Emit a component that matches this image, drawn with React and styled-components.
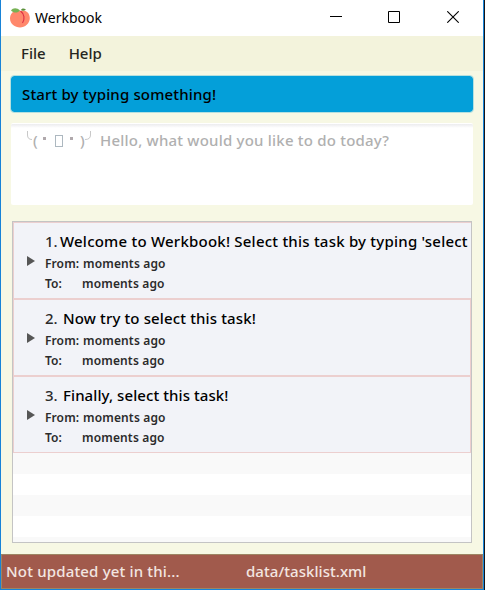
import React from "react";
import styled, { createGlobalStyle } from "styled-components";

const Global = createGlobalStyle`
  * { box-sizing: border-box; }
  body { margin: 0; background: #14161a; overflow: hidden; }
`;

const Window = styled.div`
  width: 484px;
  height: 590px;
  display: flex;
  flex-direction: column;
  border: solid #1883d7;
  border-width: 0 1px 1px;
  background: #f7f8e4;
  font-family: "Noto Sans", "Open Sans", sans-serif;
  font-weight: 500;
  color: #000;
`;

const TitleBar = styled.header`
  height: 36px;
  flex: none;
  display: flex;
  align-items: center;
  background: #fff;
  padding-left: 8px;
`;

const Label = styled.span`
  display: block;
  flex: none;
  white-space: pre;
  font-size: ${(p) => p.$size || 15}px;
  line-height: 20px;
  letter-spacing: ${(p) => p.$track || 0}px;
  font-weight: ${(p) => p.$weight || 500};
  color: ${(p) => p.$color || "#000"};
`;

const Brand = styled.div`
  display: flex;
  align-items: center;
  gap: 4px;
  flex: 1;
`;

const Controls = styled.div`
  display: flex;
  height: 36px;
  align-items: center;
  gap: 46px;
  padding: 0 24px 2px 0;
  svg { display: block; }
  svg:last-child { margin-left: 1px; }
`;

const MenuBar = styled.nav`
  height: 35px;
  flex: none;
  display: flex;
  align-items: center;
  gap: 23px;
  padding: 0 0 2px 20px;
  background: #f3f3dc;
`;

const Result = styled.div`
  height: 38px;
  flex: none;
  margin: 4px 9px 0 9px;
  padding-left: 11px;
  display: flex;
  align-items: center;
  border: 1px solid #b5e0df;
  border-radius: 4px;
  background: #049fd9;
  background-clip: padding-box;
`;

const Command = styled.div`
  height: 82px;
  flex: none;
  margin: 10px 10px 0;
  padding: 6px 13px;
  display: flex;
  border-radius: 2px;
  border-top: 1px solid #fff;
  background: linear-gradient(#ececee, #fff 4px);
`;

const Face = styled.div`
  width: 76px;
  height: 20px;
  display: flex;
  align-items: center;
`;

const Slot = styled.span`
  width: ${(p) => p.$w}px;
  flex: none;
  font-size: 15px;
  line-height: 20px;
  color: #b0b0b0;
  white-space: pre;
`;

const Eye = styled.span`
  width: 3px;
  height: 3px;
  flex: none;
  margin: 0 ${(p) => p.$after}px 3px ${(p) => p.$before}px;
  background: #b0a9ac;
`;

const Mouth = styled.span`
  width: 8px;
  height: 12px;
  flex: none;
  margin-top: 1px;
  border: 1px solid #adb8c0;
`;

const Mark = styled.svg`
  display: block;
  flex: none;
`;

const List = styled.main`
  height: 322px;
  flex: none;
  margin: 16px 11px 0;
  border: 1px solid #c4c4c4;
  background: repeating-linear-gradient(#f9f9f9 0 21px, #fff 21px 42px) 0 231px / 100% 89px no-repeat #fff;
`;

const Card = styled.article`
  height: 77px;
  display: flex;
  align-items: flex-start;
  border: 1px solid #eccfcf;
  ${(p) => p.$overflowing && "border-right: 0;"}
  background: #f2f3f8;
  overflow: hidden;
`;

const Disclosure = styled.span`
  width: 0;
  height: 0;
  margin: 33px 10px 0 13px;
  border-left: 8px solid #565656;
  border-top: 5.5px solid transparent;
  border-bottom: 5.5px solid transparent;
`;

const Details = styled.div`
  display: flex;
  flex-direction: column;
  padding-top: 8px;
`;

const Heading = styled.div`
  display: flex;
  height: 23px;
`;

const Index = styled.div`
  width: ${(p) => p.$w}px;
`;

const Line = styled.div`
  display: flex;
  height: 20px;
`;

const Key = styled.div`
  width: ${(p) => p.$w}px;
`;

const Footer = styled.footer`
  height: 35px;
  flex: none;
  margin-top: 11px;
  display: flex;
  align-items: center;
  border: 1px solid #9d8563;
  background: #a15a4c;
  padding: 0 0 2px 4px;
`;

const SaveState = styled.div`
  width: 240px;
`;

const tasks = [
  { title: "Welcome to Werkbook! Select this task by typing 'select", w: 15, track: 0.22 },
  { title: "Now try to select this task!", w: 18, track: 0.13 },
  { title: "Finally, select this task!", w: 18, track: 0.08 },
];

function Peach() {
  return (
    <svg width="22" height="22" viewBox="0 0 22 22">
      <path d="M11 4C6 2 1 6 1 11.500C1 17 6 20.500 11 20.500C16 20.500 20.800 16.500 20.800 11C20.800 5 15.500 2 11 4Z" fill="#ff886c" />
      <path d="M11.500 4C15.500 7 16 12 13.500 16" fill="none" stroke="#dd2e44" strokeWidth="1.100" />
      <path d="M2 3.500C4 .5 8 .5 11 3.500C9 6 5 6.500 2 3.500Z" fill="#77b255" />
      <path d="M12 3C13 1 15 1 17 2.800C15 4 13 4 12 3Z" fill="#5c913b" />
    </svg>
  );
}

export default function App() {
  return (
    <>
      <Global />
      <Window>
        <TitleBar>
          <Brand>
            <Peach />
            <Label $size={14} $weight={400}>Werkbook</Label>
          </Brand>
          <Controls>
            <svg width="12" height="12" shapeRendering="crispEdges"><path d="M0 5.500H12" stroke="#000" /></svg>
            <svg width="12" height="12"><path d="M.5 .5H11.500V11.500H.5Z" fill="none" stroke="#000" /></svg>
            <svg width="12" height="12"><path d="M.3 .3L11.700 11.700M11.700 .3L.3 11.700" stroke="#000" strokeWidth="1.100" /></svg>
          </Controls>
        </TitleBar>
        <MenuBar>
          <Label $color="#252520">File</Label>
          <Label $color="#252520">Help</Label>
        </MenuBar>
        <Result><Label $track={0.15}>Start by typing something!</Label></Result>
        <Command>
          <Face>
            <Mark width="9" height="20"><path d="M3.500 1V5Q3.500 9.500 8 9.500" fill="none" stroke="#c8c8c8" /></Mark>
            <Slot $w={5}>(</Slot>
            <Eye $before={5} $after={9} />
            <Mouth />
            <Eye $before={7} $after={7} />
            <Slot $w={5}>)</Slot>
            <Mark width="7" height="20"><path d="M5.500 1V5Q5.500 9.500 0 9.500" fill="none" stroke="#c8c8c8" /></Mark>
          </Face>
          <Label $color="#b0b0b0" $track={0.21}>Hello, what would you like to do today?</Label>
        </Command>
        <List>
          {tasks.map((t, i) => (
            <Card key={t.title} $overflowing={i === 0}>
              <Disclosure />
              <Details>
                <Heading>
                  <Index $w={t.w}><Label $color="#2b2b2b" $track={-0.2}>{i + 1}.</Label></Index>
                  <Label $track={t.track}>{t.title}</Label>
                </Heading>
                <Line>
                  <Key $w={38}><Label $size={12} $weight={600} $color="#2b2b2b" $track={0.1}>From:</Label></Key>
                  <Label $size={12} $weight={600} $color="#2b2b2b" $track={0.15}>moments ago</Label>
                </Line>
                <Line>
                  <Key $w={37}><Label $size={12} $weight={600} $color="#2b2b2b">To:</Label></Key>
                  <Label $size={12} $weight={600} $color="#2b2b2b" $track={0.15}>moments ago</Label>
                </Line>
              </Details>
            </Card>
          ))}
        </List>
        <Footer>
          <SaveState><Label $color="#f3e6e1" $track={0.17}>Not updated yet in thi...</Label></SaveState>
          <Label $color="#f3e6e1" $track={0.05}>data/tasklist.xml</Label>
        </Footer>
      </Window>
    </>
  );
}
